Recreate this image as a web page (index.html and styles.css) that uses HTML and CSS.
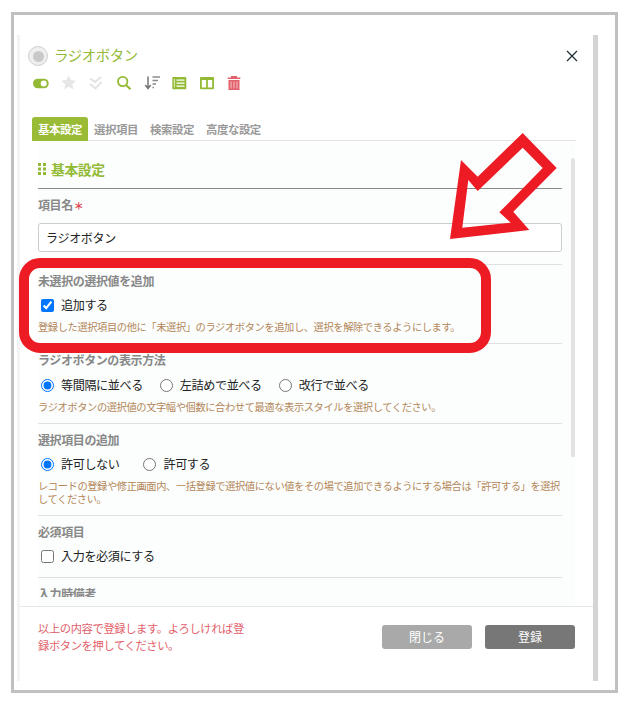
FILE: index.html
```html
<!DOCTYPE html>
<html lang="ja">
<head>
<meta charset="utf-8">
<title>ラジオボタン</title>
<link rel="stylesheet" href="styles.css">
</head>
<body>
<div class="frame">
  <div class="modal">
    <header class="head">
      <div class="title-row">
        <span class="type-icon"><span class="type-dot"></span></span>
        <h1 class="title">ラジオボタン</h1>
        <svg class="close" viewBox="0 0 12 12"><path d="M1 1l10 10M11 1L1 11" stroke="#1c2b33" stroke-width="1.2" fill="none"/></svg>
      </div>
      <div class="tools">
        <svg class="tool" viewBox="0 0 16 16"><rect x="0" y="3.700" width="15.700" height="9.600" rx="4.800" fill="#93ba35"/><circle cx="10.700" cy="8.500" r="3" fill="#fff"/></svg>
        <svg class="tool" viewBox="0 0 16 16"><path d="M7.700 .3l2.200 4.800 5.100.6-3.700 3.500 1 5.100-4.600-2.500-4.500 2.500 1-5.100L.3 5.700l5.100-.6z" fill="#e6e6e6"/></svg>
        <svg class="tool" viewBox="0 0 16 16"><path d="M1 3.500l5 3.500 6-5M1 9l5.500 4.500L12.500 7" fill="none" stroke="#e3e3e3" stroke-width="2"/></svg>
        <svg class="tool" viewBox="0 0 16 16"><circle cx="5.700" cy="6.500" r="4.700" fill="none" stroke="#93ba35" stroke-width="1.800"/><path d="M9 10l4.500 4.300" stroke="#93ba35" stroke-width="2"/></svg>
        <svg class="tool" viewBox="0 0 16 16"><path d="M3 1.500v11.500M.3 10l2.700 3.500L5.700 10" fill="none" stroke="#777" stroke-width="1.500"/><path d="M7.500 2h7.500M7.500 5.500h5.500M7.500 9h3.500M7.500 12.500h1.500" stroke="#8a8a8a" stroke-width="1.500"/></svg>
        <svg class="tool tool-flow" viewBox="0 0 16 16"><rect x="-.7" y="2" width="14" height="12.300" rx="1" fill="#93ba35"/><path d="M3.500 5.200h8M3.500 8.200h8M3.500 11.200h8" stroke="#fff" stroke-width="1.200"/><rect x=".8" y="4" width="1.200" height="8.300" fill="#dbe8b4"/></svg>
        <svg class="tool tool-flow" viewBox="0 0 16 16"><rect x="-1" y="2" width="14" height="12.300" rx="1" fill="#93ba35"/><rect x=".8" y="5" width="4.300" height="7.500" fill="#fff"/><rect x="6.900" y="5" width="4.300" height="7.500" fill="#fff"/></svg>
        <svg class="tool tool-flow" viewBox="0 0 16 16"><path d="M-1.300 2.500h12.600v1.500H-1.300zM2 1h6v1.500H2z" fill="#e2606a"/><path d="M-.5 5h11v10h-11z" fill="#e2606a"/><path d="M2 6.500V13.500M5 6.500V13.500M8 6.500V13.500" stroke="#f5c4c8" stroke-width="1"/></svg>
      </div>
    </header>

    <nav class="tabs">
      <span class="tab tab-active">基本設定</span>
      <span class="tab">選択項目</span>
      <span class="tab">検索設定</span>
      <span class="tab">高度な設定</span>
    </nav>

    <div class="body">
      <div class="scroll">
        <h2 class="section"><svg class="grip" viewBox="0 0 8 12"><path d="M0 0h3v3H0zM5 0h3v3H5zM0 4.500h3v3H0zM5 4.500h3v3H5zM0 9h3v3H0zM5 9h3v3H5z" fill="#93ba35"/></svg>基本設定</h2>

        <section class="row row-name">
          <div class="label">項目名<span class="req">＊</span></div>
          <input class="text" type="text" value="ラジオボタン">
        </section>

        <section class="row">
          <div class="label">未選択の選択値を追加</div>
          <div class="opts"><label class="opt"><input type="checkbox" checked>追加する</label></div>
          <p class="note">登録した選択項目の他に「未選択」のラジオボタンを追加し、選択を解除できるようにします。</p>
        </section>

        <section class="row row-tall">
          <div class="label">ラジオボタンの表示方法</div>
          <div class="opts">
            <label class="opt"><input type="radio" name="a" checked>等間隔に並べる</label>
            <label class="opt"><input type="radio" name="a">左詰めで並べる</label>
            <label class="opt"><input type="radio" name="a">改行で並べる</label>
          </div>
          <p class="note">ラジオボタンの選択値の文字幅や個数に合わせて最適な表示スタイルを選択してください。</p>
        </section>

        <section class="row">
          <div class="label">選択項目の追加</div>
          <div class="opts opts-wide">
            <label class="opt"><input type="radio" name="b" checked>許可しない</label>
            <label class="opt"><input type="radio" name="b">許可する</label>
          </div>
          <p class="note">レコードの登録や修正画面内、一括登録で選択値にない値をその場で追加できるようにする場合は「許可する」を選択してください。</p>
        </section>

        <section class="row row-plain">
          <div class="label">必須項目</div>
          <div class="opts"><label class="opt"><input type="checkbox">入力を必須にする</label></div>
        </section>

        <section class="row row-last">
          <div class="label">入力時備考</div>
        </section>
      </div>
      <div class="thumb"></div>
    </div>

    <footer class="foot">
      <p class="foot-msg">以上の内容で登録します。よろしければ登録ボタンを押してください。</p>
      <button class="btn btn-close" type="button">閉じる</button>
      <button class="btn btn-save" type="button">登録</button>
    </footer>
  </div>

  <svg class="marks" viewBox="0 0 629 703">
    <rect x="24" y="263" width="462" height="85" rx="16" fill="none" stroke="#ed1c24" stroke-width="10"/>
    <path fill-rule="evenodd" fill="#ed1c24" d="M522.700 133L556.700 168L513.300 211.700L529.300 230L450 239L461 160L477.700 176.700ZM522.700 147.700L477.700 191L468.300 180L462.300 227.700L510.700 222.700L499.300 212.300L542.700 168Z"/>
  </svg>
</div>
</body>
</html>
```

FILE: styles.css
```css
* { box-sizing: border-box; }
html, body { margin: 0; padding: 0; background: #fff; }
body {
  font-family: "Noto Sans CJK JP", "Noto Sans", sans-serif;
  letter-spacing: -0.025em;
  width: 629px;
  height: 703px;
  overflow: hidden;
}
.frame {
  width: 607px;
  height: 681px;
  margin: 12px 0 0 11px;
  border: 3px solid #c0c0c0;
  padding: 20px 17px 9px 3px;
  background: #fff;
}
.modal {
  width: 581px;
  height: 646px;
  border-left: 3px solid #f3f3f3;
  border-right: 5px solid #d4d4d4;
  display: flex;
  flex-direction: column;
  background: #fff;
}
.head { height: 82px; padding: 11px 15px 0 8px; flex: none; }
.title-row { display: flex; align-items: center; height: 20px; }
.type-icon {
  width: 20px; height: 20px; border-radius: 50%;
  border: 1.500px solid #cfcfcf; background: #efefef;
  display: flex; align-items: center; justify-content: center;
  flex: none;
}
.type-dot { width: 11px; height: 11px; border-radius: 50%; background: #c9c9c9; }
.title {
  margin: 0 0 2px 6px;
  font-size: 14.400px; font-weight: 400; line-height: 18px;
  color: #93ba35; flex: 1;
}
.close { width: 12px; height: 12px; flex: none; margin-bottom: 1px; }
.tools { display: flex; gap: 12px; margin: 9px 0 0 5px; height: 16px; }
.tool { width: 16px; height: 16px; flex: none; overflow: visible; }

.tabs {
  display: flex; height: 24px; margin: 0 17px 0 12px;
  border-bottom: 1px solid #e2e2e2; flex: none;
}
.tab {
  padding: 0 6px; height: 24px;
  font-size: 11.400px; font-weight: 700; line-height: 24px; color: #999;
}
.tab-active { background: #99bb35; color: #fff; border-radius: 3px 3px 0 0; }

.body {
  flex: none; height: 465px;
  margin: 0 18px; padding-bottom: 9px;
  background: #fbfefd;
  display: flex; gap: 9px;
}
.scroll { width: 524px; height: 456px; overflow: hidden; flex: none; }
.thumb { width: 4px; height: 299px; margin-top: 17px; background: #e3e3e3; border-radius: 2px 2px 0 0; flex: none; }

.section {
  margin: 0; height: 48px; padding-top: 18px;
  border-bottom: 1px solid #888;
  font-size: 13.800px; font-weight: 700; line-height: 20px; color: #93ba35;
  display: flex; align-items: flex-start;
}
.grip { width: 8px; height: 12px; margin: 4px 5px 0 0; flex: none; }

.row { border-bottom: 1px solid #e0e0e0; padding: 8px 0 10px; }
.row-name { height: 76px; }
.row-plain { padding-bottom: 12px; }
.row-last { border-bottom: 0; }
.row-tall .opts { margin-top: 8px; }
.label { font-size: 12px; font-weight: 700; line-height: 16px; color: #888; }
.req { color: #e2404a; font-size: 10px; margin-left: 1px; }
.text {
  display: block; width: 100%; height: 29px; margin-top: 9px;
  border: 1px solid #ccc; border-radius: 3px; background: #fff;
  padding: 0 7px;
  font: 12px "Noto Sans CJK JP", sans-serif; letter-spacing: -0.025em; color: #222;
}
.opts { display: flex; gap: 17px; margin: 7px 0 0 3px; height: 18px; }
.opts-wide { gap: 24px; }
.opt { display: flex; align-items: center; font-size: 12.100px; line-height: 18px; color: #222; }
.opt input { width: 13px; height: 13px; margin: 0 7px 0 0; flex: none; }
.note { margin: 6px 0 0; font-size: 10.260px; line-height: 13px; color: #b48659; }

.foot {
  flex: none; height: 75px;
  border-top: 1px solid #e6e6e6;
  padding: 13px 18px 0 18px;
  display: flex; align-items: flex-start;
}
.foot-msg { margin: 0; width: 212px; flex: none; font-size: 11.300px; line-height: 17px; color: #e2606a; }
.btn {
  height: 24px; width: 90px; border: 0; border-radius: 3px; padding: 0 0 2px;
  margin-top: 5px; flex: none;
  font: 12px "Noto Sans CJK JP", sans-serif; color: #fff;
}
.btn-close { background: #a9a9a9; margin-left: 132px; }
.btn-save { background: #777; margin-left: 13px; }

.marks { position: absolute; left: 0; top: 0; width: 629px; height: 703px; pointer-events: none; }
```
